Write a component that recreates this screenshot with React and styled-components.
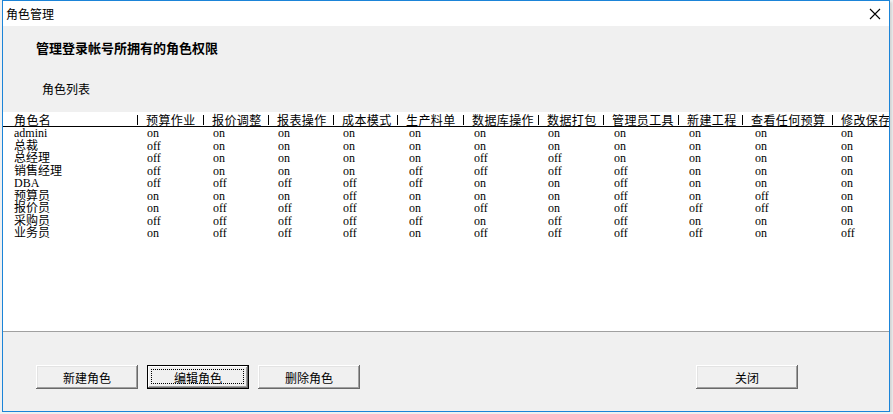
import styled, {createGlobalStyle} from 'styled-components';

const COLUMNS = ['预算作业', '报价调整', '报表操作', '成本模式', '生产料单', '数据库操作', '数据打包', '管理员工具', '新建工程', '查看任何预算', '修改保存'];

const ROLES = [
    ['admini', 'on on on on on on on on on on on'],
    ['总裁', 'off on on on on on on on on on on'],
    ['总经理', 'off on on on on off off on on on on'],
    ['销售经理', 'off on on on off off off off on on on'],
    ['DBA', 'off off off off off on on off on on on'],
    ['预算员', 'on on on off on on on off on off on'],
    ['报价员', 'on off off off on off on off off off on'],
    ['采购员', 'off off off off off on off off on on on'],
    ['业务员', 'on off off off on off off off off on off'],
];

// header columns start at the "|" separators, data columns at the values
const HEAD_COLS = '123px 66px 65px 65px 64px 66px 75px 65px 75px 64px 90px 1fr';
const DATA_COLS = '133px 66px 65px 65px 66px 65px 74px 66px 75px 66px 86px 1fr';

const GlobalStyle = createGlobalStyle`
  body {
    margin: 0;
    background: #f0f0f0;
    font-family: "Noto Sans CJK SC", sans-serif;
  }
`;

const Window = styled.div`
  box-sizing: border-box;
  margin-left: 2px;
  width: 888px;
  height: 412px;
  border: 1px solid #1b84d8;
  background: #f0f0f0;
  box-shadow: 2px 2px 2px rgba(0, 0, 0, 0.12);
  display: flex;
  flex-direction: column;
  overflow: hidden;
`;

const TitleBar = styled.div`
  height: 25px;
  background: #fff;
  display: flex;
  align-items: center;
  justify-content: space-between;
  padding: 0 8px 0 3px;
  font-size: 12px;
  color: #000;
`;

const CloseIcon = () => (
    <svg width="12" height="12" viewBox="0 0 12 12">
        <path d="M1 1 L11 11 M11 1 L1 11" stroke="#000" strokeWidth="1.1" fill="none"/>
    </svg>
);

const Body = styled.div`
  flex: 1;
  display: flex;
  flex-direction: column;
`;

const Heading = styled.div`
  padding: 14px 0 0 33px;
  font-size: 13px;
  font-weight: bold;
  line-height: 16px;
`;

const Caption = styled.div`
  padding: 25px 0 0 39px;
  font-size: 12px;
  line-height: 16px;
`;

const List = styled.div`
  box-sizing: border-box;
  margin-top: 15px;
  height: 220px;
  padding-top: 1px;
  background: #fff;
  border-bottom: 1px solid #a0a0a0;
`;

const HeadRow = styled.div`
  display: grid;
  grid-template-columns: ${HEAD_COLS};
  height: 13px;
  padding-left: 11px;
  border-bottom: 1px solid #000;
  align-items: center;
  font-size: 12px;
  line-height: 13px;
  letter-spacing: 0.4px;
  white-space: nowrap;
`;

const HeadCell = styled.div`
  display: flex;
  align-items: center;
  gap: 8px;
`;

const Sep = styled.span`
  width: 1px;
  height: 10px;
  background: #000;
  flex: none;
`;

const Row = styled.div`
  display: grid;
  grid-template-columns: ${DATA_COLS};
  height: 12.5px;
  padding-left: 11px;
  font-family: "Liberation Serif", "Noto Sans CJK SC", serif;
  font-size: 12px;
  line-height: 12.5px;
  white-space: nowrap;
`;

const Buttons = styled.div`
  display: flex;
  gap: 9px;
  margin-top: 33px;
  padding: 0 91px 0 33px;
`;

const Button = styled.button`
  box-sizing: border-box;
  width: 102px;
  height: 24px;
  margin: 0;
  padding: 0;
  position: relative;
  background: #f0f0f0;
  font-family: "Noto Sans CJK SC", sans-serif;
  font-size: 12px;
  color: #000;
  border: ${p => (p.$default ? '1px solid #000' : 'none')};
  box-shadow: ${p => (p.$default
        ? 'inset -1px -1px 0 #696969, inset 1px 1px 0 #fff, inset -2px -2px 0 #a0a0a0'
        : 'inset -1px -1px 0 #696969, inset 1px 1px 0 #fff, inset -2px -2px 0 #a0a0a0, inset 2px 2px 0 #e3e3e3')};
  margin-left: ${p => (p.$push ? 'auto' : '0')};

  &::after {
    content: '';
    display: ${p => (p.$default ? 'block' : 'none')};
    position: absolute;
    inset: 3px 4px 4px 3px;
    border: 1px dotted #000;
  }
`;

export default function App() {
    return (
        <>
            <GlobalStyle/>
            <Window>
                <TitleBar>
                    <span>角色管理</span>
                    <CloseIcon/>
                </TitleBar>
                <Body>
                    <Heading>管理登录帐号所拥有的角色权限</Heading>
                    <Caption>角色列表</Caption>
                    <List>
                        <HeadRow>
                            <HeadCell>角色名</HeadCell>
                            {COLUMNS.map(c => (
                                <HeadCell key={c}><Sep/>{c}</HeadCell>
                            ))}
                        </HeadRow>
                        {ROLES.map(([name, values]) => (
                            <Row key={name}>
                                <span>{name}</span>
                                {values.split(' ').map((v, i) => (
                                    <span key={i}>{v}</span>
                                ))}
                            </Row>
                        ))}
                    </List>
                    <Buttons>
                        <Button>新建角色</Button>
                        <Button $default>编辑角色</Button>
                        <Button>删除角色</Button>
                        <Button $push>关闭</Button>
                    </Buttons>
                </Body>
            </Window>
        </>
    );
}
